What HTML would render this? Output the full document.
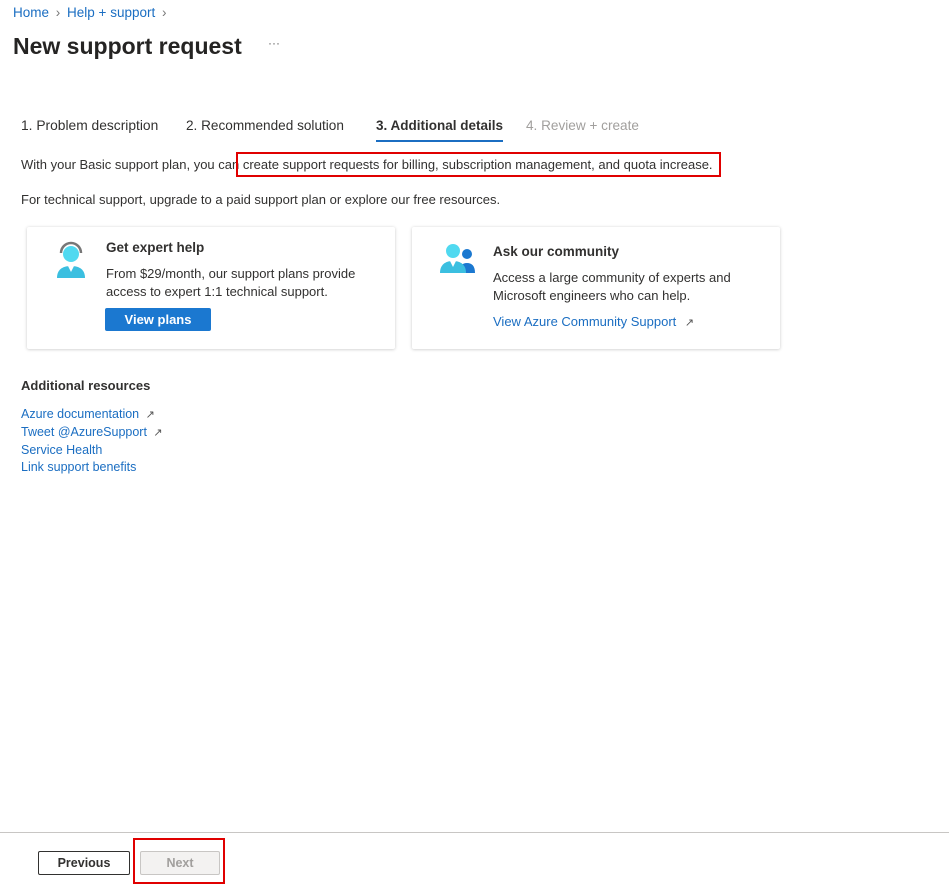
<!DOCTYPE html>
<html><head><meta charset="utf-8"><style>
*{margin:0;padding:0;box-sizing:border-box}
body{width:949px;height:888px;background:#fff;font-family:"Liberation Sans",sans-serif;color:#323130;position:relative;overflow:hidden;font-size:13px}
.a{position:absolute;white-space:nowrap}
.link{color:#1b6ec2}
.card{position:absolute;background:#fff;box-shadow:0 0.5px 3px rgba(0,0,0,.22);border-radius:2px}
</style></head><body>
<div class="a" style="left:13px;top:5px;font-size:13.5px"><span class="link">Home</span> <span style="color:#777;margin:0 3px">›</span> <span class="link">Help + support</span> <span style="color:#777;margin-left:3px">›</span></div>
<div class="a" style="left:13px;top:33px;font-size:23px;font-weight:bold;color:#252423">New support request</div>
<div class="a" style="left:268px;top:36px;font-size:12px;color:#666">···</div>

<div class="a" style="left:21px;top:118px;font-size:13.8px">1. Problem description</div>
<div class="a" style="left:186px;top:118px;font-size:13.6px">2. Recommended solution</div>
<div class="a" style="left:376px;top:118px;font-size:13.5px;font-weight:bold">3. Additional details</div>
<div class="a" style="left:376px;top:140px;width:127px;height:2px;background:#1b6ec2"></div>
<div class="a" style="left:526px;top:118px;font-size:13.6px;color:#a19f9d">4. Review + create</div>

<div class="a" style="left:21px;top:157px">With your Basic support plan, you can create support requests for billing, subscription management, and quota increase.</div>
<div class="a" style="left:236px;top:152px;width:485px;height:25px;border:2px solid #e00000"></div>
<div class="a" style="left:21px;top:192px">For technical support, upgrade to a paid support plan or explore our free resources.</div>

<div class="card" style="left:27px;top:227px;width:368px;height:122px"></div>
<svg class="a" style="left:55px;top:241px" width="32" height="38" viewBox="0 0 32 38">
<path d="M6 12a10 10 0 0 1 20 0" fill="none" stroke="#777" stroke-width="2.5"/>
<circle cx="16" cy="13" r="8" fill="#50d9f0"/>
<path d="M2 37c0-8 5-12 14-12s14 4 14 12z" fill="#3bbfe0"/>
<path d="M13 25l3 6 3-6z" fill="#fff"/>
</svg>
<div class="a" style="left:106px;top:240px;font-size:13.5px;font-weight:bold">Get expert help</div>
<div class="a" style="left:106px;top:265px;line-height:18px">From $29/month, our support plans provide<br>access to expert 1:1 technical support.</div>
<div class="a" style="left:105px;top:308px;width:106px;height:23px;background:#1b78d0;border-radius:2px;color:#fff;font-weight:bold;font-size:13px;text-align:center;line-height:23px">View plans</div>

<div class="card" style="left:412px;top:227px;width:368px;height:122px"></div>
<svg class="a" style="left:440px;top:243px" width="36" height="30" viewBox="0 0 36 30">
<circle cx="27" cy="11" r="5" fill="#1b78d0"/>
<path d="M19 30c0-7 3-10 8-10s8 3 8 10z" fill="#1b78d0"/>
<circle cx="13" cy="8" r="7" fill="#50d9f0"/>
<path d="M0 30c0-8 5-12 13-12s13 4 13 12z" fill="#3bbfe0"/>
<path d="M10 18l3 6 3-6z" fill="#fff"/>
</svg>
<div class="a" style="left:493px;top:244px;font-size:13.5px;font-weight:bold">Ask our community</div>
<div class="a" style="left:493px;top:269px;line-height:18px">Access a large community of experts and<br>Microsoft engineers who can help.</div>
<div class="a link" style="left:493px;top:314px">View Azure Community Support <span style="color:#555;margin-left:5px;font-size:11px">↗</span></div>

<div class="a" style="left:21px;top:378px;font-weight:bold">Additional resources</div>
<div class="a link" style="left:21px;top:406px;line-height:17px;font-size:12.5px">Azure documentation <span style="color:#555;font-size:11px;margin-left:3px">↗</span><br>Tweet @AzureSupport <span style="color:#555;font-size:11px;margin-left:3px">↗</span><br>Service Health<br>Link support benefits</div>

<div class="a" style="left:0;top:832px;width:949px;height:1px;background:#c8c6c4"></div>
<div class="a" style="left:38px;top:851px;width:92px;height:24px;border:1px solid #323130;border-radius:2px;text-align:center;line-height:22px;font-weight:bold;font-size:12.5px">Previous</div>
<div class="a" style="left:140px;top:851px;width:80px;height:24px;border:1px solid #c8c6c4;background:#f3f2f1;border-radius:2px;text-align:center;line-height:22px;font-weight:bold;font-size:12.5px;color:#a19f9d">Next</div>
<div class="a" style="left:133px;top:838px;width:92px;height:46px;border:2px solid #e00000"></div>
</body></html>
